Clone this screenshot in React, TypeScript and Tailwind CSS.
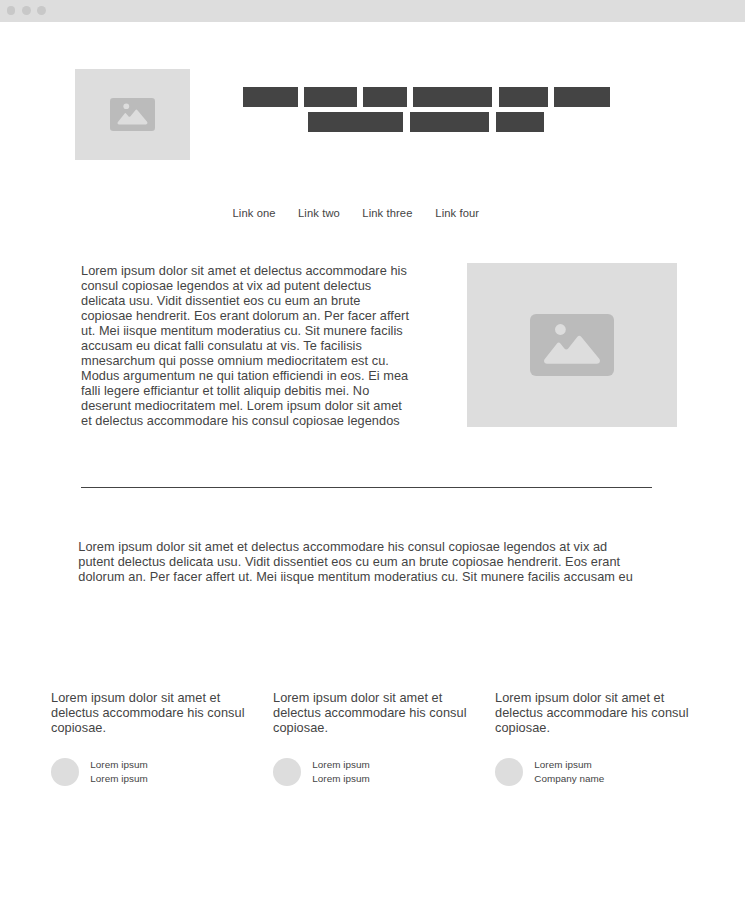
const sans = 'font-["Liberation_Sans",Arial,sans-serif]';

function ImagePlaceholder({ className, iconClass }: { className: string; iconClass: string }) {
  return (
    <div className={`bg-[#dddddd] flex ${className}`}>
      <svg viewBox="0 0 84 62" preserveAspectRatio="none" className={iconClass}>
        <rect width="84" height="62" rx="6" fill="#bbbbbb" />
        <circle cx="30.4" cy="15.5" r="5.4" fill="#dddddd" />
        <path
          d="M17 49.7C14.2 49.7 13.2 47 14.8 45L27 29.6Q28.7 27.2 30.4 29.6L34.4 34.4Q36.3 36.4 38.2 34.4L47.4 22.8Q49.3 20.5 51.2 22.8L69.2 44.8C70.8 47 69.8 49.7 67 49.7Z"
          fill="#dddddd"
        />
      </svg>
    </div>
  );
}

function Testimonial({ second }: { second: string }) {
  return (
    <div className="w-[222px] shrink-0">
      <p className="whitespace-nowrap text-[12.75px] leading-[15px] tracking-[0.047px]">
        Lorem ipsum dolor sit amet et<br />delectus accommodare his consul<br />copiosae.
      </p>
      <div className="mt-[23px] flex">
        <div className="size-7 rounded-full bg-[#dddddd]" />
        <div className="ml-[11.3px] text-[9.9px] leading-[14px] tracking-[0.03px]">
          <p>Lorem ipsum</p>
          <p>{second}</p>
        </div>
      </div>
    </div>
  );
}

export default function App() {
  return (
    <div className={`h-[912px] w-[745px] overflow-hidden bg-white text-[#444444] ${sans}`}>
      <div className="flex h-[22px] items-start gap-[6.6px] bg-[#dddddd] pl-[6.6px] pt-[6px]">
        <span className="h-[9px] w-[8.8px] rounded-full bg-[#c8c8c8]" />
        <span className="h-[9px] w-[8.8px] rounded-full bg-[#c8c8c8]" />
        <span className="h-[9px] w-[8.8px] rounded-full bg-[#c8c8c8]" />
      </div>
      <header className="flex h-[138px] pl-[75px] pt-[47px]">
        <ImagePlaceholder className="h-[91px] w-[115px] pl-[35px] pt-[29px]" iconClass="h-[33px] w-[45px]" />
        <div className="ml-[53px] mt-[18px]">
          <div className="flex h-5">
            <div className="w-[55px] bg-[#444444]" />
            <div className="ml-[6px] w-[53px] bg-[#444444]" />
            <div className="ml-[6px] w-[44px] bg-[#444444]" />
            <div className="ml-[6px] w-[79px] bg-[#444444]" />
            <div className="ml-[7px] w-[49px] bg-[#444444]" />
            <div className="ml-[6px] w-[56px] bg-[#444444]" />
          </div>
          <div className="ml-[65px] mt-[5px] flex h-5">
            <div className="w-[95px] bg-[#444444]" />
            <div className="ml-[7px] w-[79px] bg-[#444444]" />
            <div className="ml-[7px] w-[48px] bg-[#444444]" />
          </div>
        </div>
      </header>
      <nav className="mt-[47px] flex h-[13px] whitespace-nowrap pl-[232.5px] text-[11.2px] leading-[13px] tracking-[0.11px]">
        <a className="w-[65.5px]">Link one</a>
        <a className="w-[64.3px]">Link two</a>
        <a className="w-[73px]">Link three</a>
        <a>Link four</a>
      </nav>
      <section className="mt-[43px] flex h-[164px] pl-[81px]">
        <p className="w-[386px] whitespace-nowrap text-[12.75px] leading-[15px] tracking-[0.05px]">
          Lorem ipsum dolor sit amet et delectus accommodare his<br />
          consul copiosae legendos at vix ad putent delectus<br />
          delicata usu. Vidit dissentiet eos cu eum an brute<br />
          copiosae hendrerit. Eos erant dolorum an. Per facer affert<br />
          ut. Mei iisque mentitum moderatius cu. Sit munere facilis<br />
          accusam eu dicat falli consulatu at vis. Te facilisis<br />
          mnesarchum qui posse omnium mediocritatem est cu.<br />
          Modus argumentum ne qui tation efficiendi in eos. Ei mea<br />
          falli legere efficiantur et tollit aliquip debitis mei. No<br />
          deserunt mediocritatem mel. Lorem ipsum dolor sit amet<br />
          et delectus accommodare his consul copiosae legendos
        </p>
        <ImagePlaceholder className="h-[164px] w-[210px] pl-[63px] pt-[51px]" iconClass="h-[62px] w-[84px]" />
      </section>
      <div className="ml-[81px] mt-[60px] h-px w-[571px] bg-[#444444]" />
      <p className="ml-[78.3px] mt-[51px] whitespace-nowrap text-[12.75px] leading-[15px] tracking-[0.05px]">
        Lorem ipsum dolor sit amet et delectus accommodare his consul copiosae legendos at vix ad<br />
        putent delectus delicata usu. Vidit dissentiet eos cu eum an brute copiosae hendrerit. Eos erant<br />
        dolorum an. Per facer affert ut. Mei iisque mentitum moderatius cu. Sit munere facilis accusam eu
      </p>
      <section className="ml-[51px] mt-[106px] flex">
        <Testimonial second="Lorem ipsum" />
        <Testimonial second="Lorem ipsum" />
        <Testimonial second="Company name" />
      </section>
    </div>
  );
}
